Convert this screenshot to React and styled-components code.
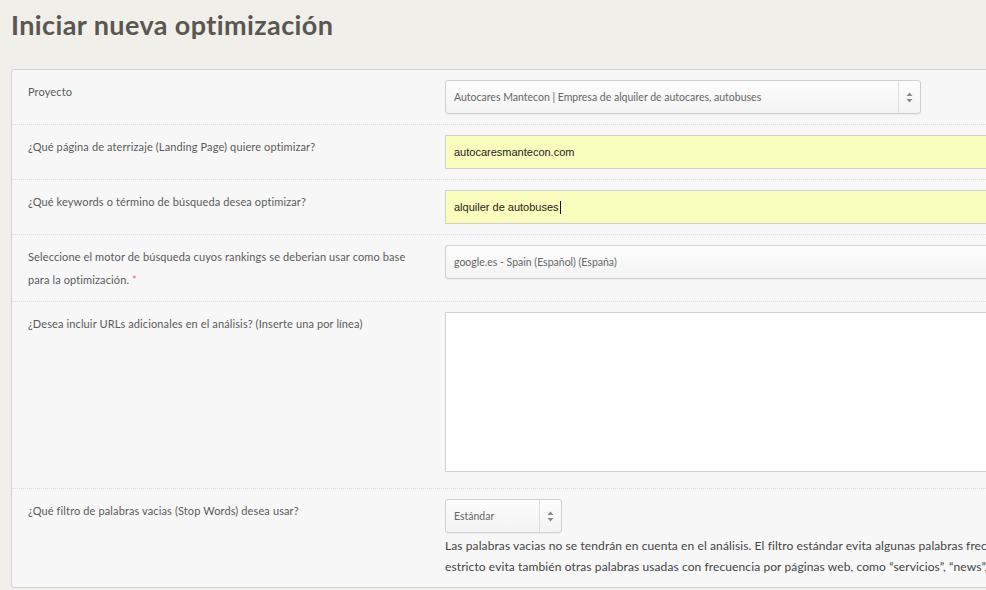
import React from 'react'
import styled, { createGlobalStyle } from 'styled-components'

const GlobalStyle = createGlobalStyle`
  html, body {
    margin: 0;
    padding: 0;
    background: #f1efea;
    overflow: hidden;
  }
  body {
    font-family: 'Lato', 'Open Sans', sans-serif;
    color: #555;
  }
`

const Page = styled.div`
  padding: 0 0 0 11px;
  width: 1300px;
`

const Title = styled.h1`
  margin: 0;
  padding: 7px 0 0 0;
  height: 69px;
  box-sizing: border-box;
  font-family: 'Lato', sans-serif;
  font-weight: 700;
  font-size: 27px;
  line-height: 36px;
  color: #5b5651;
  letter-spacing: 0.4px;
`

const Panel = styled.div`
  background: #f7f7f7;
  border: 1px solid #d3d3d3;
  border-radius: 3px;
`

const Row = styled.div`
  display: grid;
  grid-template-columns: 417px 1fr;
  padding: 10px 0 10px 16px;
  border-top: ${p => (p.$first ? 'none' : '1px dotted #dcdcdc')};
`

const Label = styled.div`
  font-size: 11px;
  line-height: 23px;
  color: #5a5a5a;
  letter-spacing: 0.12px;
  padding-right: 20px;
`

const Required = styled.span`
  color: #e07070;
`

const Control = styled.div`
  display: flex;
  flex-direction: column;
  align-items: flex-start;
`

const SelectBox = styled.div`
  box-sizing: border-box;
  width: ${p => p.$width};
  height: 34px;
  border: 1px solid #d0d0d0;
  border-radius: 3px;
  background: linear-gradient(#fdfdfd, #f3f3f3);
  box-shadow: 0 1px 1px rgba(0, 0, 0, 0.04);
  display: flex;
  align-items: center;
  font-size: 10.5px;
  color: #666;
`

const SelectText = styled.span`
  flex: 1;
  padding-left: 8px;
  white-space: nowrap;
`

const Arrows = styled.span`
  width: 21px;
  height: 100%;
  border-left: 1px solid #dedede;
  display: flex;
  align-items: center;
  justify-content: center;
`

const TextInput = styled.div`
  box-sizing: border-box;
  width: 700px;
  height: 34px;
  border: 1px solid #d0d0d0;
  background: #fafebd;
  display: flex;
  align-items: center;
  padding-left: 8px;
  font-family: 'Liberation Sans', Arial, sans-serif;
  font-size: 11px;
  color: #222;
`

const Caret = styled.span`
  display: inline-block;
  width: 1px;
  height: 13px;
  background: #111;
  margin-left: 1px;
`

const TextArea = styled.div`
  box-sizing: border-box;
  width: 700px;
  height: 160px;
  border: 1px solid #d0d0d0;
  background: #fff;
  margin-bottom: 6px;
`

const Help = styled.p`
  margin: 2px 0 0 0;
  font-size: 12px;
  line-height: 21px;
  color: #444;
  letter-spacing: 0.1px;
  white-space: nowrap;
`

function UpDown() {
  return (
    <svg width="7" height="11" viewBox="0 0 7 11">
      <path d="M3.5 0.5 L6.5 4 L0.5 4 Z" fill="#8a8a8a" />
      <path d="M0.5 7 L6.5 7 L3.5 10.5 Z" fill="#8a8a8a" />
    </svg>
  )
}

function Select({ value, width, arrows = true }) {
  return (
    <SelectBox $width={width}>
      <SelectText>{value}</SelectText>
      {arrows && (
        <Arrows>
          <UpDown />
        </Arrows>
      )}
    </SelectBox>
  )
}

export default function App() {
  return (
    <Page>
      <GlobalStyle />
      <Title>Iniciar nueva optimización</Title>
      <Panel>
        <Row $first>
          <Label>Proyecto</Label>
          <Control>
            <Select width="476px" value="Autocares Mantecon | Empresa de alquiler de autocares, autobuses" />
          </Control>
        </Row>
        <Row>
          <Label>¿Qué página de aterrizaje (Landing Page) quiere optimizar?</Label>
          <Control>
            <TextInput>autocaresmantecon.com</TextInput>
          </Control>
        </Row>
        <Row>
          <Label>¿Qué keywords o término de búsqueda desea optimizar?</Label>
          <Control>
            <TextInput>
              alquiler de autobuses
              <Caret />
            </TextInput>
          </Control>
        </Row>
        <Row>
          <Label>
            Seleccione el motor de búsqueda cuyos rankings se deberian usar como base para la optimización.{' '}
            <Required>*</Required>
          </Label>
          <Control>
            <Select width="700px" arrows={false} value="google.es - Spain (Español) (España)" />
          </Control>
        </Row>
        <Row>
          <Label>¿Desea incluir URLs adicionales en el análisis? (Inserte una por línea)</Label>
          <Control>
            <TextArea />
          </Control>
        </Row>
        <Row>
          <Label>¿Qué filtro de palabras vacias (Stop Words) desea usar?</Label>
          <Control>
            <Select width="117px" value="Estándar" />
            <Help>
              Las palabras vacias no se tendrán en cuenta en el análisis. El filtro estándar evita algunas palabras frecuentes. El filtro
              <br />
              estricto evita también otras palabras usadas con frecuencia por páginas web, como “servicios”, “news”, “contacto”.
            </Help>
          </Control>
        </Row>
      </Panel>
    </Page>
  )
}
